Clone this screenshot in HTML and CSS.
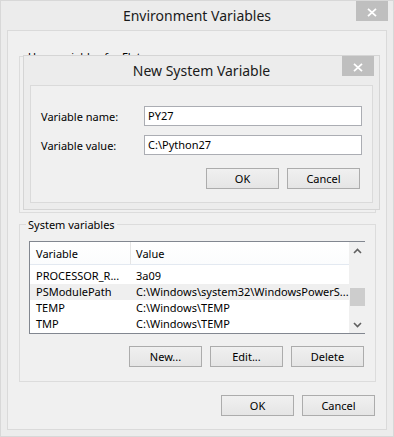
FILE: index.html
```html
<!DOCTYPE html>
<html>
<head>
<meta charset="utf-8">
<title>Environment Variables</title>
<link rel="stylesheet" href="styles.css">
</head>
<body>
<div class="window">
  <div class="titlebar">
    <span class="title">Environment Variables</span>
    <span class="close"><svg width="10" height="9" viewBox="0 0 10 9"><path d="M1 0.8 L9 8.2 M9 0.8 L1 8.2" stroke="#fff" stroke-width="1.8" fill="none"/></svg></span>
  </div>
  <div class="client">
    <div class="group user-group">
      <span class="group-label">User variables for Flat</span>
    </div>
    <div class="group sys-group">
      <span class="group-label">System variables</span>
      <div class="listview">
        <div class="list-main">
          <div class="list-header">
            <span class="col1">Variable</span><span class="sep"></span><span class="col2">Value</span>
          </div>
          <div class="list-rows">
            <div class="row"><span class="col1">PROCESSOR_R...</span><span class="col2">3a09</span></div>
            <div class="row selected"><span class="col1">PSModulePath</span><span class="col2">C:\Windows\system32\WindowsPowerS...</span></div>
            <div class="row"><span class="col1">TEMP</span><span class="col2">C:\Windows\TEMP</span></div>
            <div class="row"><span class="col1">TMP</span><span class="col2">C:\Windows\TEMP</span></div>
          </div>
        </div>
        <div class="scrollbar">
          <div class="arrow"><svg width="9" height="6" viewBox="0 0 9 6"><polyline points="1,5 4.5,1.5 8,5" stroke="#606060" stroke-width="1.6" fill="none"/></svg></div>
          <div class="track"><div class="thumb"></div></div>
          <div class="arrow"><svg width="9" height="6" viewBox="0 0 9 6"><polyline points="1,1 4.5,4.5 8,1" stroke="#606060" stroke-width="1.6" fill="none"/></svg></div>
        </div>
      </div>
      <div class="btn-row">
        <button class="btn">New...</button>
        <button class="btn">Edit...</button>
        <button class="btn">Delete</button>
      </div>
    </div>
    <div class="footer">
      <button class="btn">OK</button>
      <button class="btn">Cancel</button>
    </div>

    <div class="dialog">
      <div class="titlebar dlg-titlebar">
        <span class="title">New System Variable</span>
        <span class="close"><svg width="10" height="9" viewBox="0 0 10 9"><path d="M1 0.8 L9 8.2 M9 0.8 L1 8.2" stroke="#fff" stroke-width="1.8" fill="none"/></svg></span>
      </div>
      <div class="dlg-client">
        <div class="field first">
          <span class="field-label">Variable name:</span>
          <span class="input">PY27</span>
        </div>
        <div class="field">
          <span class="field-label">Variable value:</span>
          <span class="input">C:\Python27</span>
        </div>
        <div class="dlg-buttons">
          <button class="btn">OK</button>
          <button class="btn">Cancel</button>
        </div>
      </div>
    </div>
  </div>
</div>
</body>
</html>
```

FILE: styles.css
```css
* { box-sizing: border-box; }
html, body { margin: 0; padding: 0; }
body {
  font-family: "Noto Sans", "Segoe UI", sans-serif;
  font-size: 11px;
  color: #000;
  background: #ececec;
}
.window {
  width: 394px;
  height: 437px;
  border: 1px solid #d8d8d8;
  background: #ececec;
  display: flex;
  flex-direction: column;
}
.titlebar {
  display: grid;
  height: 29px;
  flex: none;
}
.titlebar > * { grid-area: 1 / 1; }
.title {
  font-size: 14px;
  line-height: 29px;
  text-align: center;
  color: #1a1a1a;
}
.close {
  justify-self: end;
  align-self: start;
  width: 32px;
  height: 20px;
  margin-right: 5px;
  background: #bfbfbf;
  display: flex;
  align-items: center;
  justify-content: center;
  padding-top: 2px;
}
.close svg { display: block; }
.client {
  position: relative;
  margin: 0 6px 6px 6px;
  height: 400px;
  border: 1px solid #dadada;
  background: #f0f0f0;
  display: flex;
  flex-direction: column;
}
.group {
  border: 1px solid #dcdcdc;
  width: 357px;
  margin-left: 11px;
  display: flex;
  flex-direction: column;
  align-items: flex-start;
}
.user-group {
  margin-top: 25px;
  height: 157px;
}
.sys-group {
  margin-top: 11px;
  height: 158px;
}
.group-label {
  margin-top: -7px;
  margin-left: 6px;
  padding: 0 2px;
  line-height: 14px;
  background: #f0f0f0;
}
.listview {
  align-self: stretch;
  margin: 9px 10px 0 9px;
  height: 93px;
  border: 1px solid #828790;
  background: #fff;
  display: flex;
}
.list-main {
  flex: 1;
  display: flex;
  flex-direction: column;
}
.list-header {
  height: 23px;
  border-bottom: 1px solid #e3e9f1;
  display: flex;
  align-items: center;
  background: linear-gradient(#ffffff, #fbfcfd);
}
.list-header .sep {
  width: 1px;
  align-self: stretch;
  background: #e5e5e5;
}
.col1 {
  width: 100px;
  padding-left: 6px;
  white-space: nowrap;
  overflow: hidden;
  flex: none;
}
.list-header .col2 { padding-left: 5px; }
.list-rows { padding-top: 3px; }
.row {
  height: 16px;
  line-height: 16px;
  display: flex;
}
.row .col2 {
  padding-left: 6px;
  white-space: nowrap;
  overflow: hidden;
}
.row.selected { background: #efefef; }
.scrollbar {
  width: 17px;
  flex: none;
  background: #f0f0f0;
  display: flex;
  flex-direction: column;
}
.arrow {
  height: 17px;
  display: flex;
  align-items: center;
  justify-content: center;
}
.arrow svg { display: block; }
.track { flex: 1; }
.thumb {
  margin: 29px 1px 0 1px;
  height: 18px;
  background: #cdcdcd;
}
.btn {
  font-family: inherit;
  font-size: 11px;
  color: #000;
  width: 73px;
  height: 21px;
  padding: 0;
  border: 1px solid #acacac;
  background: linear-gradient(#f0f0f0, #e5e5e5);
  border-radius: 0;
  line-height: 19px;
}
.btn-row {
  align-self: stretch;
  display: flex;
  justify-content: flex-end;
  gap: 8px;
  margin-top: 12px;
  padding-right: 11px;
}
.footer {
  display: flex;
  justify-content: flex-end;
  gap: 8px;
  margin-top: 13px;
  padding-right: 11px;
}
.dialog {
  position: absolute;
  left: 15px;
  top: 24px;
  width: 357px;
  height: 155px;
  border: 1px solid #d5d5d5;
  background: #ececec;
  display: flex;
  flex-direction: column;
}
.dlg-client {
  margin: 0 6px 6px 6px;
  flex: 1;
  border: 1px solid #dadada;
  background: #f0f0f0;
  display: flex;
  flex-direction: column;
}
.field {
  display: flex;
  align-items: center;
  margin-top: 9px;
  padding-left: 10px;
}
.field.first { margin-top: 20px; }
.field-label {
  width: 103px;
}
.input {
  width: 218px;
  height: 20px;
  border: 1px solid #abadb3;
  background: #fff;
  padding-left: 3px;
  line-height: 18px;
}
.dlg-buttons {
  display: flex;
  justify-content: flex-end;
  gap: 8px;
  margin-top: 13px;
  padding-right: 12px;
}
```
